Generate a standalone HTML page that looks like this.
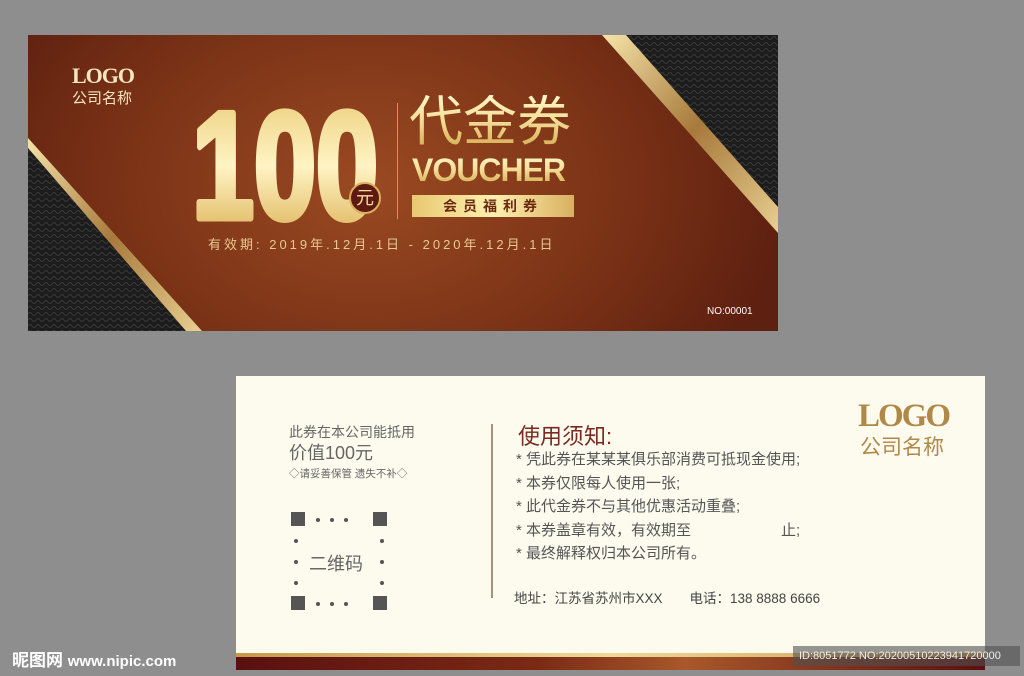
<!DOCTYPE html><html><head><meta charset="utf-8"><style>
*{margin:0;padding:0;box-sizing:border-box}
body{width:1024px;height:676px;background:#8e8e8e;position:relative;overflow:hidden;font-family:"Liberation Sans","Noto Sans CJK SC",sans-serif}
.a{position:absolute}
.gold{background:linear-gradient(180deg,#fff6c8,#f6e09a 45%,#d4aa50);-webkit-background-clip:text;color:transparent}
</style></head><body>
<div class="a" style="left:28px;top:35px;width:750px;height:296px;background:radial-gradient(ellipse 420px 300px at 340px 150px,#9a4a22,#7a3216 60%,#5e2010);overflow:hidden">
<svg class="a" style="left:0;top:0" width="750" height="296">
<defs><linearGradient id="g" x1="0" y1="0" x2="1" y2="1"><stop offset="0" stop-color="#f5e3a8"/><stop offset=".5" stop-color="#a77a3c"/><stop offset="1" stop-color="#e8cf90"/></linearGradient>
<linearGradient id="t" x1="0" y1="0" x2="0" y2="1"><stop offset="0" stop-color="#e8c870"/><stop offset=".5" stop-color="#fff4c4"/><stop offset="1" stop-color="#d8a848"/></linearGradient>
<pattern id="p" width="8" height="6" patternUnits="userSpaceOnUse"><rect width="8" height="6" fill="#1c1c1c"/><path d="M0 3Q2 0 4 3T8 3" stroke="#3a3a3a" fill="none"/></pattern></defs>
<polygon points="0,113 0,296 158,296" fill="url(#p)"/>
<polygon points="0,103 0,113 158,296 174,296" fill="url(#g)"/>
<polygon points="598,0 750,0 750,172" fill="url(#p)"/>
<polygon points="574,0 598,0 750,172 750,198" fill="url(#g)"/>
<text x="164" y="183" font-family="Liberation Sans" font-weight="bold" font-size="152" fill="url(#t)" stroke="url(#t)" stroke-width="7" stroke-linejoin="round" textLength="186" lengthAdjust="spacingAndGlyphs">100</text>
</svg>
<div class="a" style="left:44px;top:28px;color:#f5e6c0;font:bold 22px 'Liberation Serif',serif;letter-spacing:-1px">LOGO</div>
<div class="a" style="left:44px;top:52px;color:#f5e6c0;font-size:15px">公司名称</div>
<div class="a" style="left:321px;top:147px;width:32px;height:32px;border-radius:50%;background:#5e1a10;border:2px solid #d8b060;color:#f5e0a0;font-size:18px;text-align:center;line-height:28px">元</div>
<div class="a" style="left:369px;top:68px;width:1px;height:116px;background:#c89a58"></div>
<div class="a gold" style="left:381px;top:60px;font-size:54px;line-height:1">代金券</div>
<div class="a gold" style="left:384px;top:119px;font:bold 32px/1 'Liberation Sans',sans-serif;letter-spacing:-1px">VOUCHER</div>
<div class="a" style="left:384px;top:160px;width:162px;height:22px;background:linear-gradient(90deg,#e8c870,#fff0b0,#d8b060);color:#6a2a10;font-size:14px;font-weight:bold;text-align:center;line-height:22px;letter-spacing:6px">会员福利券</div>
<div class="a" style="left:180px;top:199px;color:#e8c890;font-size:13px;letter-spacing:3px;white-space:nowrap">有效期: 2019年.12月.1日 - 2020年.12月.1日</div>
<div class="a" style="left:679px;top:271px;color:#fff;font-size:10px">NO:00001</div>
</div>
<div class="a" style="left:236px;top:376px;width:749px;height:294px;background:#fdfbee;overflow:hidden">
<div class="a" style="left:53px;top:46px;color:#666;font-size:14px">此券在本公司能抵用</div>
<div class="a" style="left:53px;top:63px;color:#666;font-size:18px">价值100元</div>
<div class="a" style="left:53px;top:90px;color:#666;font-size:10.5px">◇请妥善保管 遗失不补◇</div>
<svg class="a" style="left:55px;top:136px" width="100" height="100"><g fill="#555"><rect x="0" y="0" width="14" height="14"/><rect x="82" y="0" width="14" height="14"/><rect x="0" y="84" width="14" height="14"/><rect x="82" y="84" width="14" height="14"/><circle cx="27" cy="8" r="2"/><circle cx="41" cy="8" r="2"/><circle cx="55" cy="8" r="2"/><circle cx="27" cy="92" r="2"/><circle cx="41" cy="92" r="2"/><circle cx="55" cy="92" r="2"/><circle cx="5" cy="29" r="2"/><circle cx="5" cy="50" r="2"/><circle cx="5" cy="71" r="2"/><circle cx="91" cy="29" r="2"/><circle cx="91" cy="50" r="2"/><circle cx="91" cy="71" r="2"/></g></svg>
<div class="a" style="left:73px;top:174px;color:#666;font-size:18px">二维码</div>
<div class="a" style="left:255px;top:48px;width:2px;height:174px;background:#a89080"></div>
<div class="a" style="left:282px;top:43px;color:#7a2a20;font-size:22px">使用须知:</div>
<div class="a" style="left:280px;top:72px;color:#555;font-size:15px;line-height:23.5px">* 凭此券在某某某俱乐部消费可抵现金使用;<br>* 本券仅限每人使用一张;<br>* 此代金券不与其他优惠活动重叠;<br>* 本券盖章有效，有效期至　　　　　　止;<br>* 最终解释权归本公司所有。</div>
<div class="a" style="left:278px;top:211px;color:#444;font-size:13.5px">地址：江苏省苏州市XXX　　电话：138 8888 6666</div>
<div class="a" style="left:622px;top:22px;color:#b08848;font:bold 33px 'Liberation Serif',serif;letter-spacing:-2px">LOGO</div>
<div class="a" style="left:624px;top:55px;color:#b08848;font-size:21px">公司名称</div>
<div class="a" style="left:0;top:277px;width:749px;height:4px;background:linear-gradient(90deg,#c89848,#f0d898,#c89848)"></div>
<div class="a" style="left:0;top:281px;width:749px;height:13px;background:linear-gradient(90deg,#5a1010,#7a2a14 40%,#a8582a 60%,#5a1010)"></div>
</div>
<div class="a" style="left:793px;top:646px;width:227px;height:20px;background:rgba(80,80,80,.6);color:#eee;font-size:11px;line-height:20px;padding-left:6px">ID:8051772 NO:20200510223941720000</div>
<div class="a" style="left:12px;top:646px;color:#fff;font-size:17px;font-weight:bold">昵图网 <span style="font-size:15px">www.nipic.com</span></div>
</body></html>
